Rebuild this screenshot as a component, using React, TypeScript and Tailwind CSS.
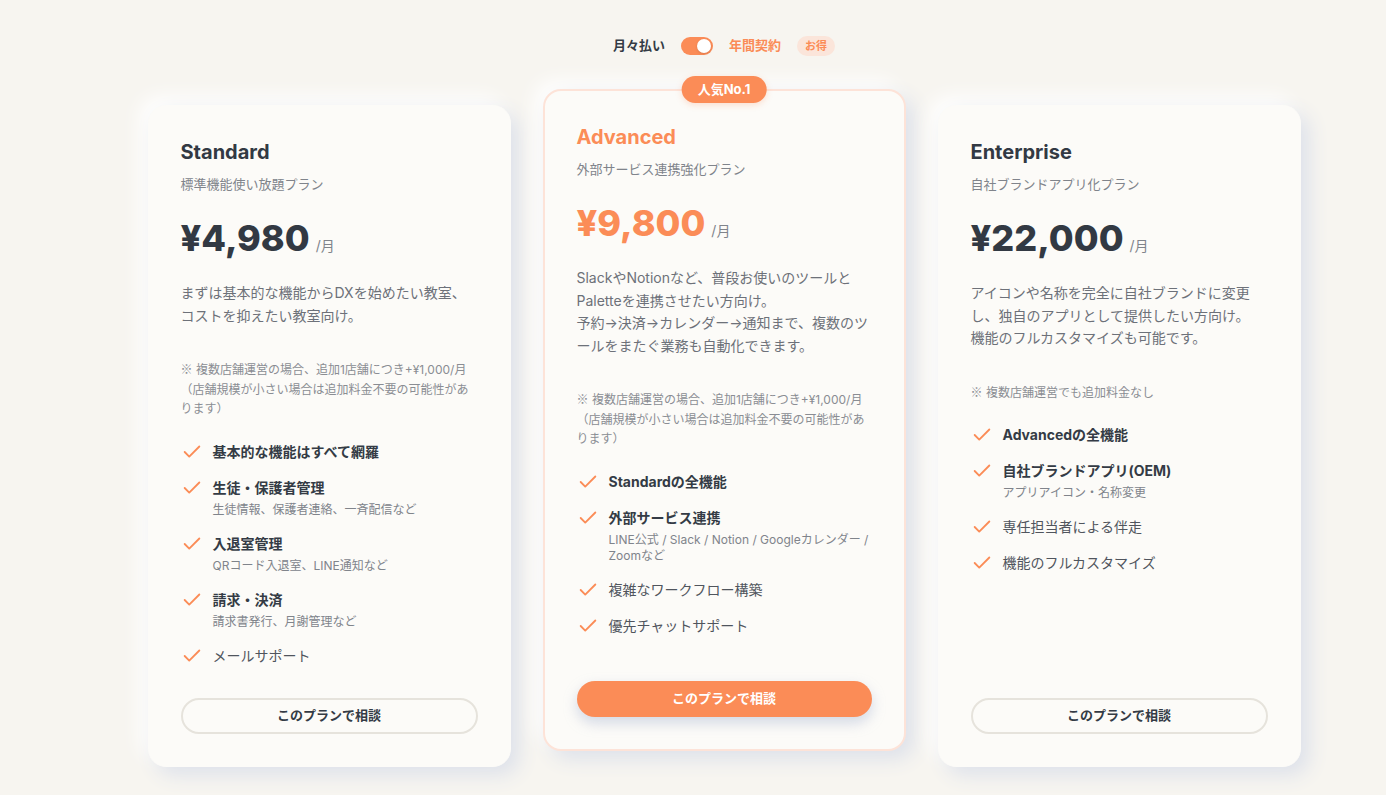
import React, { useState } from 'react';
import { Check } from 'lucide-react';

type Feature = {
  title: string;
  sub?: string[];
  bold?: boolean;
};

type Plan = {
  name: string;
  tagline: string;
  price: string;
  desc: string[];
  note: string[];
  features: Feature[];
  featured?: boolean;
};

const plans: Plan[] = [
  {
    name: 'Standard',
    tagline: '標準機能使い放題プラン',
    price: '¥4,980',
    desc: ['まずは基本的な機能からDXを始めたい教室、', 'コストを抑えたい教室向け。'],
    note: [
      '※ 複数店舗運営の場合、追加1店舗につき+¥1,000/月',
      '（店舗規模が小さい場合は追加料金不要の可能性があ',
      'ります）',
    ],
    features: [
      { title: '基本的な機能はすべて網羅', bold: true },
      { title: '生徒・保護者管理', sub: ['生徒情報、保護者連絡、一斉配信など'], bold: true },
      { title: '入退室管理', sub: ['QRコード入退室、LINE通知など'], bold: true },
      { title: '請求・決済', sub: ['請求書発行、月謝管理など'], bold: true },
      { title: 'メールサポート' },
    ],
  },
  {
    name: 'Advanced',
    tagline: '外部サービス連携強化プラン',
    price: '¥9,800',
    desc: [
      'SlackやNotionなど、普段お使いのツールと',
      'Paletteを連携させたい方向け。',
      '予約→決済→カレンダー→通知まで、複数のツ',
      'ールをまたぐ業務も自動化できます。',
    ],
    note: [
      '※ 複数店舗運営の場合、追加1店舗につき+¥1,000/月',
      '（店舗規模が小さい場合は追加料金不要の可能性があ',
      'ります）',
    ],
    features: [
      { title: 'Standardの全機能', bold: true },
      {
        title: '外部サービス連携',
        sub: ['LINE公式 / Slack / Notion / Googleカレンダー /', 'Zoomなど'],
        bold: true,
      },
      { title: '複雑なワークフロー構築' },
      { title: '優先チャットサポート' },
    ],
    featured: true,
  },
  {
    name: 'Enterprise',
    tagline: '自社ブランドアプリ化プラン',
    price: '¥22,000',
    desc: [
      'アイコンや名称を完全に自社ブランドに変更',
      'し、独自のアプリとして提供したい方向け。',
      '機能のフルカスタマイズも可能です。',
    ],
    note: ['※ 複数店舗運営でも追加料金なし'],
    features: [
      { title: 'Advancedの全機能', bold: true },
      { title: '自社ブランドアプリ(OEM)', sub: ['アプリアイコン・名称変更'], bold: true },
      { title: '専任担当者による伴走' },
      { title: '機能のフルカスタマイズ' },
    ],
  },
];

// ※ is tiny in Inter, so give it the CJK face
function NoteLine({ text }: { text: string }) {
  if (text.startsWith('※')) {
    return (
      <span className="block whitespace-nowrap">
        <span className="font-['Noto_Sans_CJK_JP',sans-serif]">※</span>
        {text.slice(1)}
      </span>
    );
  }
  return <span className="block whitespace-nowrap">{text}</span>;
}

function PlanCard({ plan }: { plan: Plan }) {
  const accent = plan.featured;
  return (
    <div
      className={
        'relative w-[363px] flex flex-col rounded-[18px] bg-[#fcfbf8] px-8 pt-8 pb-8 ' +
        (accent
          ? 'border-2 border-[#fde3d8] -translate-y-[16px] shadow-[8px_8px_20px_#dde1ea,-8px_-8px_20px_#ffffff]'
          : 'border border-[#fcfbf8] shadow-[8px_8px_20px_#dde1ea,-8px_-8px_20px_#ffffff]')
      }
    >
      {accent && (
        <div className="absolute -top-[15px] left-1/2 -translate-x-1/2 h-[27px] px-4 rounded-full bg-[#fb8c57] text-white text-[13px] font-bold flex items-center shadow-[0_2px_6px_rgba(251,140,87,0.25)]">
          人気No.1
        </div>
      )}
      <h3 className={'text-xl leading-7 font-bold ' + (accent ? 'text-[#fb8c57]' : 'text-[#323943]')}>
        {plan.name}
      </h3>
      <p className="mt-2 text-[13px] leading-5 text-[#80848b]">{plan.tagline}</p>
      <div className="mt-6 flex items-baseline">
        <span className={'text-[36px] leading-10 font-extrabold ' + (accent ? 'text-[#fb8c57]' : 'text-[#323943]')}>
          {plan.price}
        </span>
        <span className="ml-1.5 text-sm text-[#80848b]">/月</span>
      </div>
      <p className="mt-6 text-sm leading-[22.5px] text-[#6d7179]">
        {plan.desc.map((l) => (
          <span key={l} className="block whitespace-nowrap">
            {l}
          </span>
        ))}
      </p>
      <p className="mt-8 text-xs leading-[19.5px] text-[#8a8d93]">
        {plan.note.map((l) => (
          <NoteLine key={l} text={l} />
        ))}
      </p>
      <ul className="mt-[23px] flex-1 flex flex-col gap-4">
        {plan.features.map((f) => (
          <li key={f.title} className="flex items-start gap-2.5">
            <Check className="w-[22px] h-[22px] shrink-0 -my-px text-[#fb8c57]" strokeWidth={2} />
            <div>
              <div className={'h-5 text-sm leading-5 ' + (f.bold ? 'font-bold text-[#343b45]' : 'text-[#50555d]')}>
                {f.title}
              </div>
              {f.sub && (
                <div className="mt-1 text-xs leading-4 text-[#80848b]">
                  {f.sub.map((s) => (
                    <span key={s} className="block h-4 whitespace-nowrap">
                      {s}
                    </span>
                  ))}
                </div>
              )}
            </div>
          </li>
        ))}
      </ul>
      <button
        className={
          'mt-8 h-9 w-full rounded-full text-[13px] font-bold ' +
          (accent
            ? 'bg-[#fb8c57] text-white shadow-[0_6px_14px_rgba(150,165,200,0.4)]'
            : 'bg-[#fcfbf8] text-[#343b45] border-2 border-[#e6e3dc]')
        }
      >
        このプランで相談
      </button>
    </div>
  );
}

export default function App() {
  const [yearly, setYearly] = useState(true);

  return (
    <div className="min-h-screen bg-[#f7f5f0] pl-[62px] font-['Inter','Noto_Sans_CJK_JP',sans-serif]">
      <div className="flex flex-col items-center pt-9">
        <div className="flex items-center gap-4 h-5">
          <span className="text-[13px] font-bold text-[#343b45]">月々払い</span>
          <button
            onClick={() => setYearly(!yearly)}
            className={
              'relative w-8 h-[18px] rounded-full flex items-center px-[2px] ' +
              (yearly ? 'bg-[#fb8c57] justify-end' : 'bg-[#d6d3cc] justify-start')
            }
          >
            <span className="w-[14px] h-[14px] rounded-full bg-white shadow-sm" />
          </button>
          <span className="text-[13px] font-bold text-[#fb8c57]">年間契約</span>
          <span className="h-5 px-2 rounded-full bg-[#fbe5da] text-[11px] font-bold text-[#fb8c57] flex items-center">
            お得
          </span>
        </div>

        <div className="mt-[49px] flex items-stretch gap-8">
          {plans.map((p) => (
            <PlanCard key={p.name} plan={p} />
          ))}
        </div>
      </div>
    </div>
  );
}
